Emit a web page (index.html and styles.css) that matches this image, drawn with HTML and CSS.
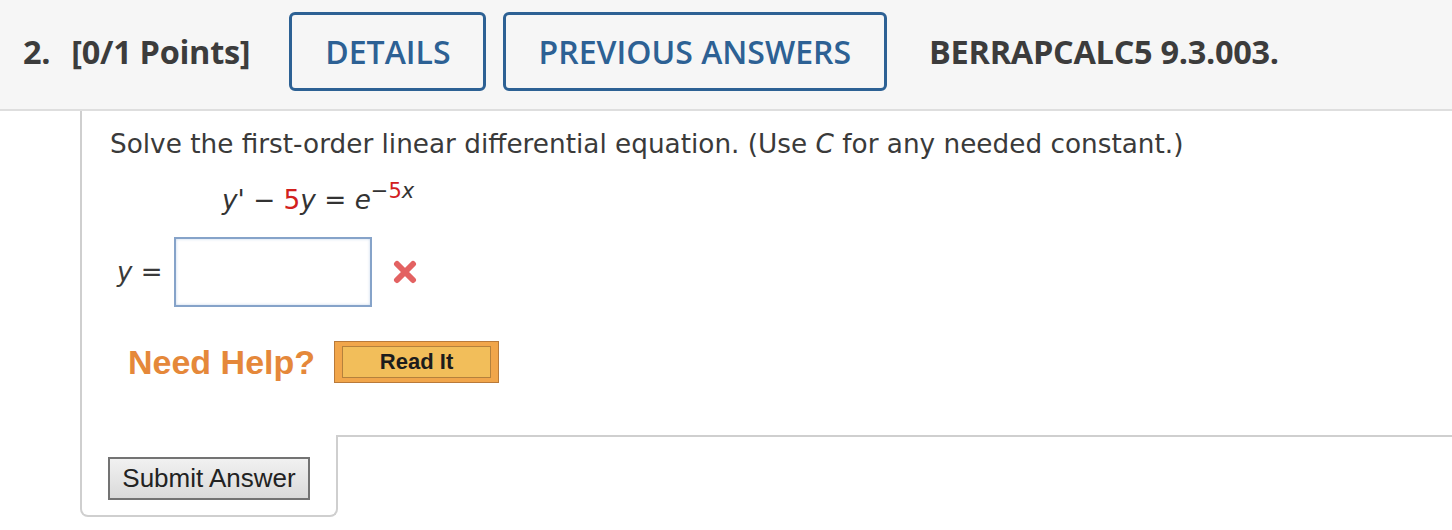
FILE: index.html
```html
<!DOCTYPE html>
<html>
<head>
<meta charset="utf-8">
<link rel="stylesheet" href="styles.css">
</head>
<body>
<div class="header">
  <span class="qnum">2.</span>
  <span class="points">[0/1 Points]</span>
  <a class="hbtn first">DETAILS</a>
  <a class="hbtn">PREVIOUS ANSWERS</a>
  <span class="code">BERRAPCALC5 9.3.003.</span>
</div>
<div class="qbody">
  <p class="prompt">Solve the first-order linear differential equation. (Use <i>C</i> for any needed constant.)</p>
  <p class="eq"><i>y'</i> − <span class="red">5</span><i>y</i> = <i>e</i><sup>−<span class="red">5</span><i>x</i></sup></p>
  <div class="answer">
    <span class="lhs"><i>y</i> =</span>
    <span class="input"></span>
    <svg class="wrong" width="26" height="24" viewBox="0 0 26 24"><path d="M5 4 L21 20 M21 4 L5 20" stroke="#e36262" stroke-width="6" stroke-linecap="round"/></svg>
  </div>
  <div class="help">
    <span class="needhelp">Need Help?</span>
    <span class="readit"><span class="readit-inner">Read It</span></span>
  </div>
</div>
<div class="footer">
  <div class="submit-cell">
    <span class="submit">Submit Answer</span>
  </div>
  <div class="filler"></div>
</div>
</body>
</html>
```
FILE: styles.css
```css
html, body {
  margin: 0;
  padding: 0;
  background: #ffffff;
}
.header {
  height: 111px;
  box-sizing: border-box;
  background: #f6f6f6;
  border-bottom: 2px solid #dedede;
  display: flex;
  align-items: center;
  padding: 0 0 7px 23px;
  font-family: "Open Sans", sans-serif;
  color: #3c3c3c;
}
.qnum, .points, .code {
  font-size: 32.5px;
  font-weight: 700;
  letter-spacing: -0.3px;
}
.points {
  margin-left: 21px;
}
.hbtn {
  height: 79px;
  box-sizing: border-box;
  border: 3px solid #2d6194;
  border-radius: 6px;
  display: flex;
  align-items: center;
  padding: 0 33px;
  margin-left: 17px;
  font-size: 32px;
  font-weight: 600;
  color: #2d6194;
}
.hbtn.first {
  margin-left: 39px;
  padding: 0 32px 0 33px;
}
.code {
  margin-left: 42px;
}
.qbody {
  margin-left: 80px;
  border-left: 2px solid #cfcfcf;
  padding: 18px 0 0 28px;
  height: 324px;
  box-sizing: border-box;
  font-family: "DejaVu Sans", Verdana, sans-serif;
  color: #3a3a3a;
}
.prompt {
  margin: 0;
  font-size: 26.3px;
  line-height: 30px;
}
.eq {
  margin: 26px 0 0 112px;
  font-size: 26.3px;
  line-height: 30px;
  color: #333;
}
.eq sup {
  font-size: 21px;
  vertical-align: 11px;
  line-height: 0;
}
.red {
  color: #d2201d;
}
.answer {
  display: flex;
  align-items: center;
  margin-top: 22px;
}
.lhs {
  font-size: 26px;
  margin-left: 7px;
  width: 57px;
}
.input {
  width: 198px;
  height: 70px;
  box-sizing: border-box;
  border: 2px solid #86a3c9;
  box-shadow: inset 0 0 3px rgba(120, 160, 210, 0.45);
  background: #fff;
}
.wrong {
  margin-left: 20px;
}
.help {
  display: flex;
  align-items: center;
  margin-top: 34px;
  margin-left: 18px;
}
.needhelp {
  font-family: "Liberation Sans", Arial, sans-serif;
  font-weight: 700;
  font-size: 34px;
  color: #e5883a;
}
.readit {
  margin-left: 19px;
  width: 165px;
  height: 42px;
  box-sizing: border-box;
  border: 1px solid #b97a3a;
  background: #f1a64b;
  padding: 4px 7px;
  display: flex;
}
.readit-inner {
  flex: 1;
  border: 1px solid #b5813c;
  background: #f2be5a;
  font-family: "Liberation Sans", Arial, sans-serif;
  font-weight: 700;
  font-size: 22px;
  color: #1c1c1c;
  display: flex;
  align-items: center;
  justify-content: center;
}
.footer {
  display: flex;
}
.submit-cell {
  margin-left: 80px;
  width: 258px;
  height: 82px;
  box-sizing: border-box;
  border: 2px solid #cfcfcf;
  border-top: none;
  border-radius: 0 0 8px 8px;
  padding: 22px 0 0 26px;
}
.filler {
  flex: 1;
  border-top: 2px solid #cfcfcf;
}
.submit {
  display: inline-flex;
  align-items: center;
  justify-content: center;
  width: 202px;
  height: 43px;
  box-sizing: border-box;
  border: 2px solid #737373;
  background: linear-gradient(#f1f1f1, #dadada);
  font-family: "Liberation Sans", Arial, sans-serif;
  font-size: 26px;
  color: #222;
}
```
